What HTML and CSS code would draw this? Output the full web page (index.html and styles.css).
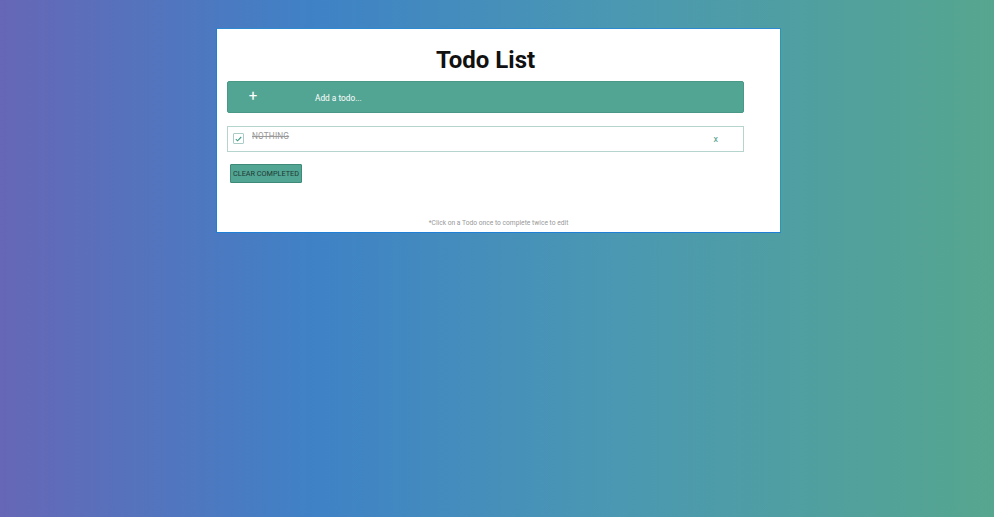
FILE: index.html
```html
<!DOCTYPE html>
<html>
<head>
<meta charset="utf-8">
<link rel="stylesheet" href="styles.css">
</head>
<body>
<div class="card">
  <div class="inner">
    <h1 class="title">Todo List</h1>
    <div class="add-bar">
      <span class="plus">+</span>
      <span class="placeholder">Add a todo...</span>
    </div>
    <div class="todo">
      <span class="check">
        <svg width="7" height="6" viewBox="0 0 7 6"><path d="M0.8 3.2 L2.6 4.8 L6.2 1" fill="none" stroke="#3f9c84" stroke-width="1.1"/></svg>
      </span>
      <span class="todo-text">NOTHING</span>
      <span class="remove">x</span>
    </div>
    <div class="actions">
      <button class="clear">CLEAR COMPLETED</button>
    </div>
  </div>
  <p class="hint">*Click on a Todo once to complete twice to edit</p>
</div>
</body>
</html>
```
FILE: styles.css
```css
html, body {
  margin: 0;
  padding: 0;
}
body {
  width: 994px;
  height: 517px;
  background: linear-gradient(to right, #6667b6 0%, #3f82c6 32%, #4a98b2 62%, #56a68f 100%);
  font-family: Roboto, "Liberation Sans", sans-serif;
  overflow: hidden;
}
.card {
  box-sizing: border-box;
  width: 565px;
  height: 205px;
  margin: 28px 0 0 216px;
  background: #fff;
  border: 1px solid #1f7fd6;
  border-right-color: #2a97b0;
  border-top-color: #2d89d0;
  display: flex;
  flex-direction: column;
}
.inner {
  width: 517px;
  margin-left: 10px;
  display: flex;
  flex-direction: column;
}
.title {
  margin: 16px 0 0 0;
  font-size: 24px;
  line-height: 30px;
  font-weight: 700;
  text-align: center;
  color: #111;
}
.add-bar {
  box-sizing: border-box;
  margin-top: 6px;
  height: 32px;
  background: #53a593;
  border: 1px solid #4a9886;
  border-radius: 2px;
  display: flex;
  align-items: center;
  color: #fff;
}
.plus {
  width: 18px;
  margin-left: 16px;
  font-size: 15px;
  line-height: 15px;
  text-align: center;
  margin-top: -2px;
}
.placeholder {
  margin-left: 53px;
  font-size: 8.3px;
  margin-top: 2px;
}
.todo {
  box-sizing: border-box;
  margin-top: 13px;
  height: 26px;
  border: 1px solid #b4d4cd;
  display: flex;
  align-items: flex-start;
}
.check {
  box-sizing: border-box;
  width: 11px;
  height: 11px;
  margin: 6px 0 0 5px;
  border: 1px solid #a9cdc6;
  border-radius: 1px;
  display: flex;
  align-items: center;
  justify-content: center;
}
.todo-text {
  margin: 4px 0 0 8px;
  font-size: 8.2px;
  line-height: 11px;
  color: #999;
  text-decoration: line-through;
  letter-spacing: 0.2px;
  flex: 1;
}
.remove {
  margin: 7px 25px 0 0;
  font-size: 9px;
  line-height: 11px;
  color: #4c9c8b;
}
.actions {
  margin-top: 12px;
  padding-left: 3px;
  display: flex;
}
.clear {
  box-sizing: border-box;
  height: 19px;
  width: 72px;
  padding: 0;
  background: #53a593;
  border: 1px solid #3d8a78;
  border-radius: 1px;
  font-family: Roboto, "Liberation Sans", sans-serif;
  font-size: 7.3px;
  color: #1c3a34;
  cursor: pointer;
}
.hint {
  margin: auto 0 5px 0;
  text-align: center;
  font-size: 6.7px;
  color: #999;
}
```
